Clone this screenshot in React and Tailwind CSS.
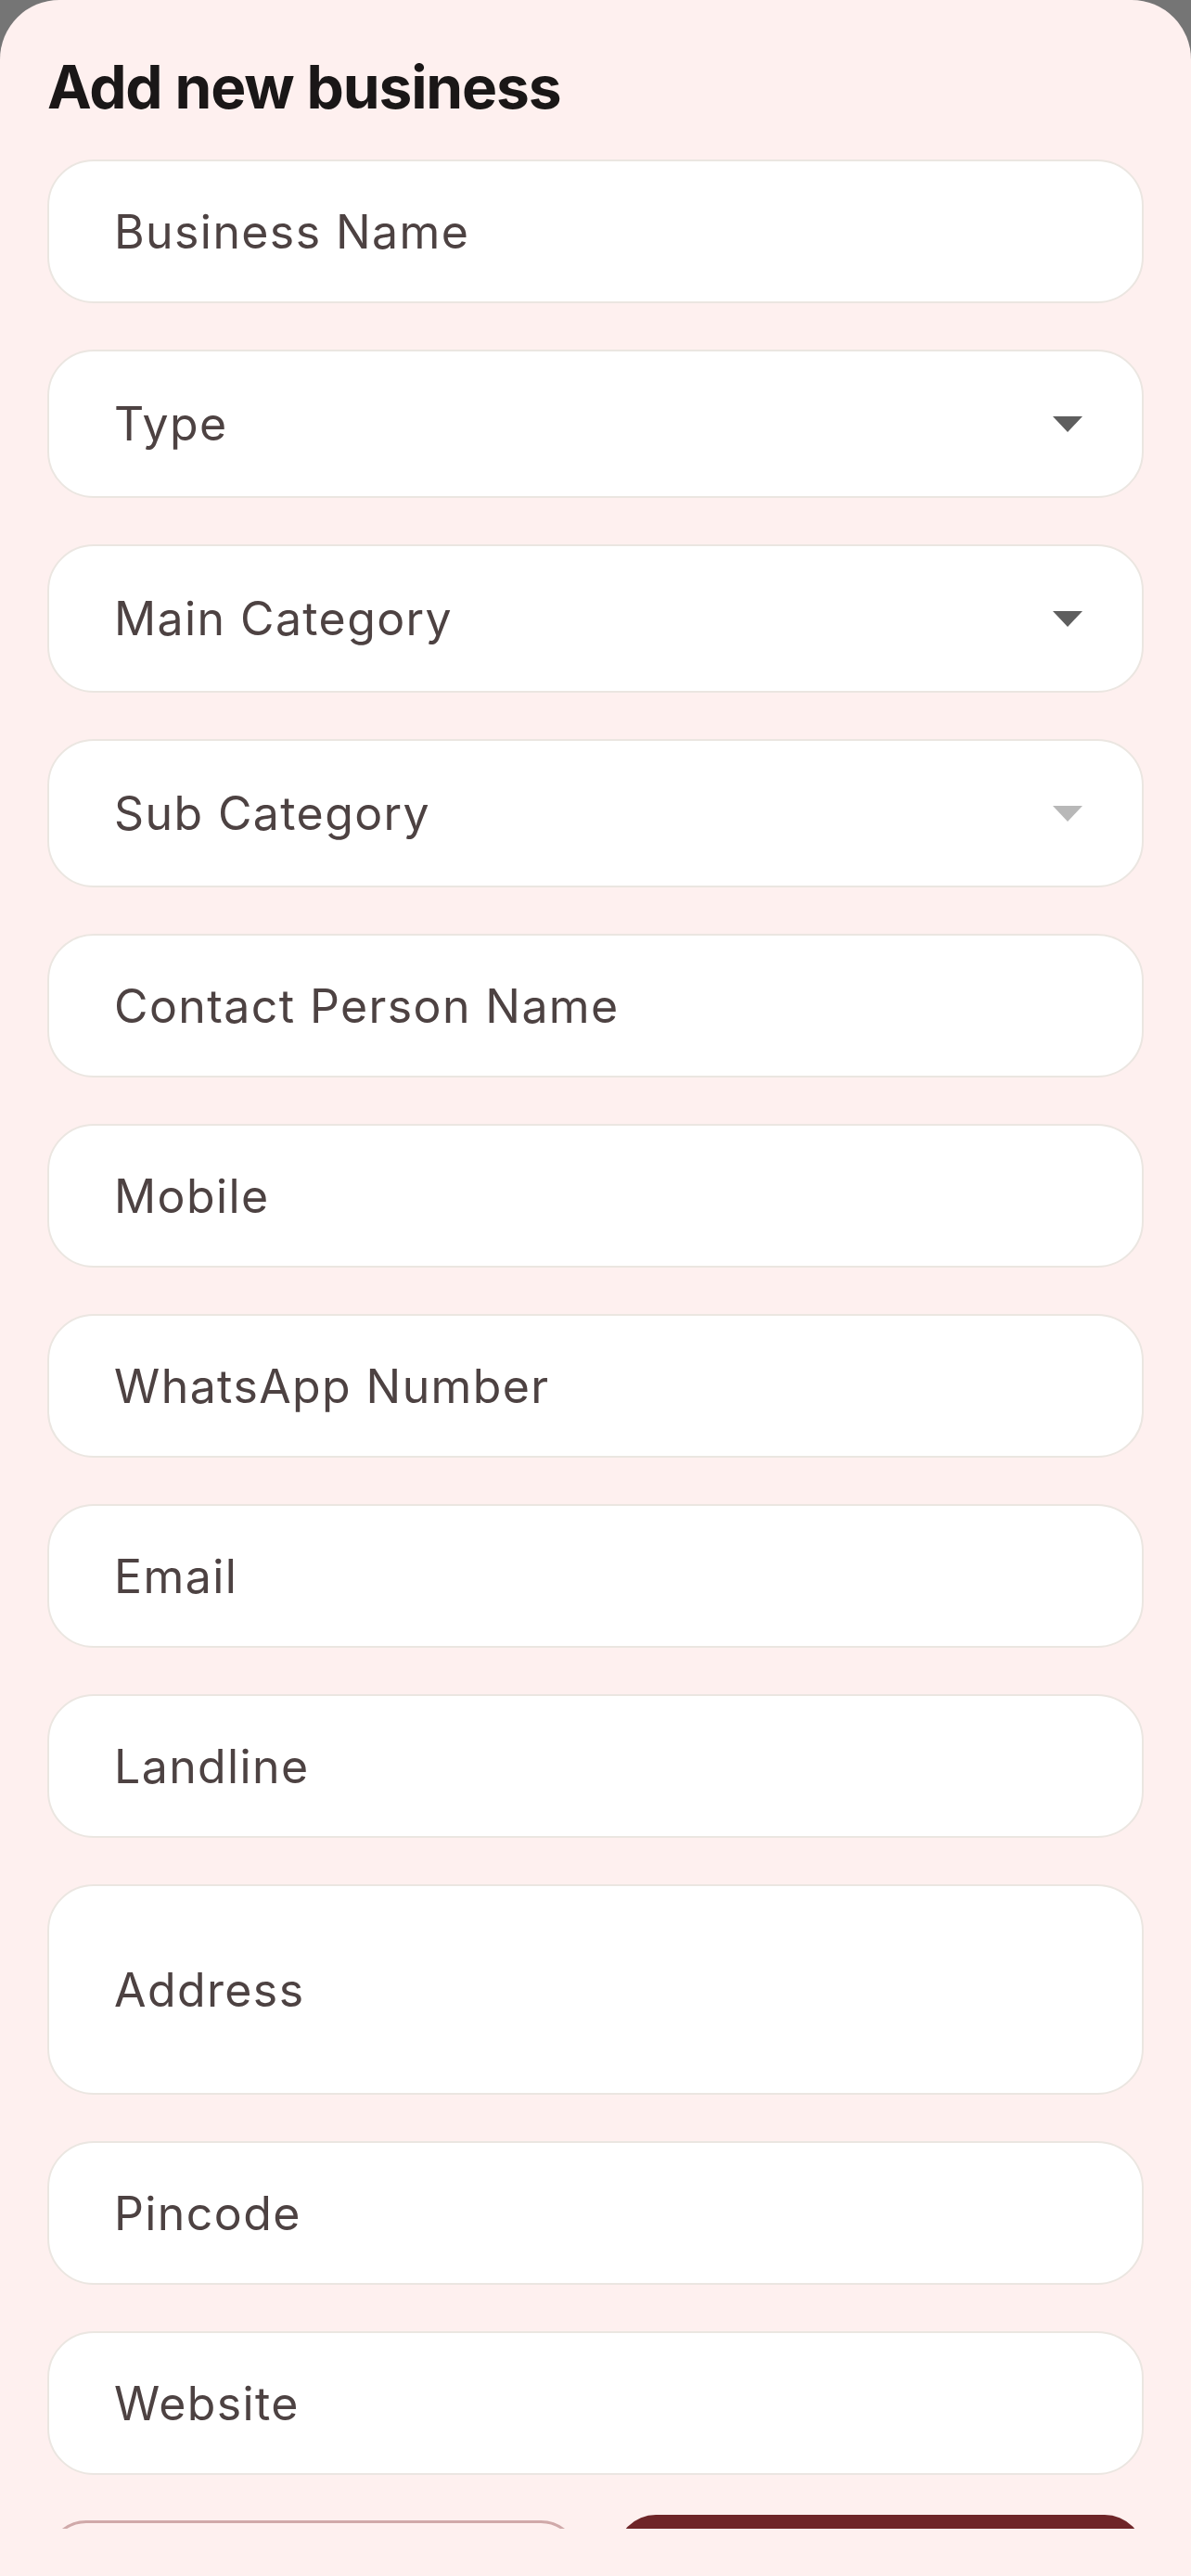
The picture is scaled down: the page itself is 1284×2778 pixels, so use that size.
const fields = [
  { label: "Business Name" },
  { label: "Type", select: true },
  { label: "Main Category", select: true },
  { label: "Sub Category", select: true, disabled: true },
  { label: "Contact Person Name" },
  { label: "Mobile" },
  { label: "WhatsApp Number" },
  { label: "Email" },
  { label: "Landline" },
  { label: "Address", tall: true },
  { label: "Pincode" },
  { label: "Website" },
];

function Field({ label, select, disabled, tall }) {
  let height = "h-[155px]";
  if (select) height = "h-[160px]";
  if (tall) height = "h-[227px]";
  return (
    <div
      className={`${height} flex items-center justify-between rounded-[50px] border-2 border-[#ebe6e1] bg-white pl-[70px] pr-[64px]`}
    >
      <span className="text-[50px] leading-none tracking-[0.028em] text-[#4d4242]">{label}</span>
      {select && (
        <svg width="32" height="17" viewBox="0 0 32 17">
          <path d="M0 0H32L16 17Z" fill={disabled ? "#b8b8b8" : "#5e5e5e"} />
        </svg>
      )}
    </div>
  );
}

export default function App() {
  return (
    <div className="h-[2778px] overflow-hidden bg-[#757575] font-['Inter','Noto_Sans',sans-serif]">
      <div className="flex h-full flex-col rounded-t-[64px] bg-[#fef0ef]">
        <div className="h-[2727px] overflow-hidden px-[51px]">
          <h1 className="mt-[62px] text-[64px] font-bold leading-none tracking-[-0.018em] text-[#1a1717]">
            Add new business
          </h1>
          <div className="mt-[46px] flex flex-col gap-[50px]">
            {fields.map((f) => (
              <Field key={f.label} {...f} />
            ))}
          </div>
          <div className="mt-[43px] flex items-start gap-[40px]">
            <button className="mt-[6px] h-[130px] flex-1 rounded-[42px] border-[3px] border-[#d0a9a9] bg-transparent" />
            <button className="h-[136px] flex-1 rounded-[42px] bg-[#6e2528]" />
          </div>
        </div>
      </div>
    </div>
  );
}
